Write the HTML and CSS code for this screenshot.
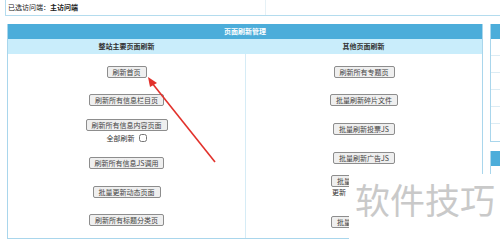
FILE: index.html
```html
<!DOCTYPE html>
<html lang="zh-CN">
<head>
    <meta charset="UTF-8">
    <title>页面刷新管理</title>
    <link rel="stylesheet" href="styles.css">
</head>
<body>
    <div class="top-bar">
        <div class="top-cell">已选访问端：<b>主访问端</b></div>
        <div class="top-cell"></div>
    </div>

    <div class="main">
        <div class="panel">
            <div class="panel-head">页面刷新管理</div>
            <div class="panel-sub">
                <div class="sub-cell">整站主要页面刷新</div>
                <div class="sub-cell">其他页面刷新</div>
            </div>
            <div class="panel-body">
                <div class="col">
                    <button class="btn m12">刷新首页</button>
                    <button class="btn m16">刷新所有信息栏目页</button>
                    <button class="btn m13">刷新所有信息内容页面</button>
                    <label class="check-line m1">全部刷新 <input type="checkbox"></label>
                    <button class="btn m14">刷新所有信息JS调用</button>
                    <button class="btn m17">批量更新动态页面</button>
                    <button class="btn m16">刷新所有标题分类页</button>
                </div>
                <div class="col col-right">
                    <button class="btn m12">刷新所有专题页</button>
                    <button class="btn m16">批量刷新碎片文件</button>
                    <button class="btn m17">批量刷新投票JS</button>
                    <button class="btn m17">批量刷新广告JS</button>
                    <!-- 下面几项被水印遮住，只露出开头 -->
                    <button class="btn btn-cut m11">批量</button>
                    <div class="text-line">更新</div>
                    <button class="btn btn-cut m19">批量</button>
                </div>
            </div>
        </div>

        <div class="side">
            <div class="side-box">
                <div class="panel-head"></div>
                <div class="side-row"></div>
                <div class="side-row"></div>
                <div class="side-row"></div>
                <div class="side-row"></div>
                <div class="side-row"></div>
                <div class="side-row last"></div>
            </div>
            <div class="side-box second">
                <div class="panel-head"></div>
                <div class="side-row"></div>
            </div>
        </div>
    </div>

    <!-- 标注箭头 -->
    <svg class="arrow" width="500" height="242" viewBox="0 0 500 242">
        <line x1="215" y1="162" x2="152" y2="83" stroke="#e2312b" stroke-width="1.6"/>
        <polygon points="148,77 157,83 150,87" fill="#e2312b"/>
    </svg>

    <div class="watermark">软件技巧</div>
</body>
</html>
```

FILE: styles.css
```css
body {
    margin: 0;
    width: 500px;
    height: 242px;
    overflow: hidden;
    position: relative;
    background: #fff;
    font-family: "Noto Sans CJK SC", "Noto Sans", sans-serif;
    color: #333;
}
.top-bar {
    display: flex;
    margin-left: 5px;
    width: 520px;
    height: 15px;
    border-left: 1px solid #b4dcee;
    border-bottom: 1px solid #b4dcee;
}
.top-cell {
    font-size: 7px;
    line-height: 15px;
    padding-left: 2px;
    width: 348px;
    color: #222;
    border-right: 1px solid #e6f1f6;
}
.top-cell b {
    font-weight: bold;
}
.main {
    display: flex;
    gap: 7px;
    margin-top: 8px;
    padding-left: 7px;
}
.panel {
    width: 474px;
    flex-shrink: 0;
    border: 1px solid #a9d6ec;
    border-top: none;
    height: 214px;
    display: flex;
    flex-direction: column;
}
.panel-head {
    height: 15px;
    background: #4cadda;
    color: #fff;
    font-size: 7px;
    font-weight: bold;
    line-height: 15px;
    text-align: center;
}
.panel-sub {
    display: flex;
    height: 15px;
    background: #c9edfb;
}
.sub-cell {
    flex: 1;
    font-size: 7px;
    font-weight: bold;
    line-height: 15px;
    text-align: center;
    color: #333;
}
.panel-body {
    display: flex;
    flex: 1;
}
.col {
    width: 237px;
    display: flex;
    flex-direction: column;
    align-items: center;
}
.col-right {
    flex: 1;
    border-left: 1px solid #d6ecf6;
}
.btn {
    font-family: inherit;
    font-size: 7px;
    line-height: 8px;
    padding: 1px 5px;
    color: #444;
    background: #efefef;
    border: 1px solid #8d8d8d;
    border-radius: 2px;
}
.btn-cut {
    width: 66px;
    text-align: left;
}
.m1 { margin-top: 1px; }
.m11 { margin-top: 11px; }
.m12 { margin-top: 12px; }
.m13 { margin-top: 13px; }
.m14 { margin-top: 14px; }
.m16 { margin-top: 16px; }
.m17 { margin-top: 17px; }
.m19 { margin-top: 19px; }
.check-line {
    display: flex;
    align-items: center;
    gap: 4px;
    font-size: 7px;
    height: 11px;
}
.check-line input {
    width: 8px;
    height: 8px;
    margin: 0;
}
.text-line {
    font-size: 7px;
    line-height: 10px;
    width: 64px;
}
.side {
    width: 60px;
    flex-shrink: 0;
}
.side-box {
    border-left: 1px solid #a9d6ec;
}
.side-row {
    height: 16px;
    border-bottom: 1px solid #dcecf4;
}
.side-row.last {
    height: 17px;
    border-bottom-color: #a9d6ec;
}
.side-box.second {
    margin-top: 9px;
}
.arrow {
    position: absolute;
    left: 0;
    top: 0;
}
.watermark {
    position: absolute;
    left: 349px;
    top: 174px;
    width: 151px;
    height: 68px;
    background: #fff;
    color: #c9c9c9;
    font-size: 35px;
    line-height: 1;
    padding: 7px 0 0 6px;
    box-sizing: border-box;
    white-space: nowrap;
}
```
